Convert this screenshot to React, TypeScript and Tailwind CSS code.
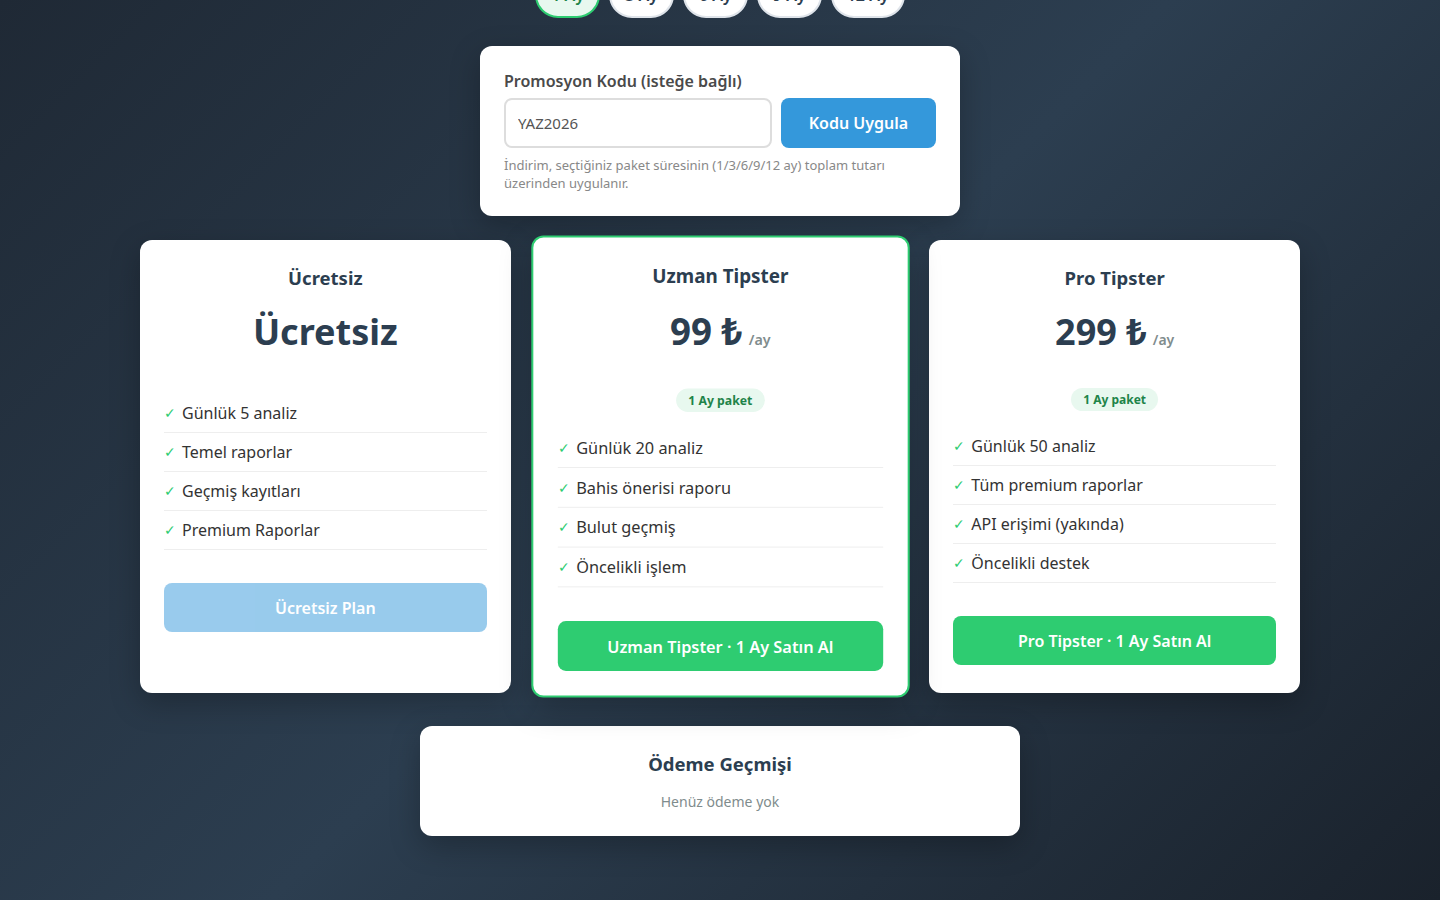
import React from "react";

type Plan = {
  title: string;
  price: string;
  perMonth: boolean;
  badge?: string;
  features: string[];
  button: string;
  featured?: boolean;
  disabled?: boolean;
};

const plans: Plan[] = [
  {
    title: "Ücretsiz",
    price: "Ücretsiz",
    perMonth: false,
    features: ["Günlük 5 analiz", "Temel raporlar", "Geçmiş kayıtları", "Premium Raporlar"],
    button: "Ücretsiz Plan",
    disabled: true,
  },
  {
    title: "Uzman Tipster",
    price: "99 ₺",
    perMonth: true,
    badge: "1 Ay paket",
    features: ["Günlük 20 analiz", "Bahis önerisi raporu", "Bulut geçmiş", "Öncelikli işlem"],
    button: "Uzman Tipster · 1 Ay Satın Al",
    featured: true,
  },
  {
    title: "Pro Tipster",
    price: "299 ₺",
    perMonth: true,
    badge: "1 Ay paket",
    features: ["Günlük 50 analiz", "Tüm premium raporlar", "API erişimi (yakında)", "Öncelikli destek"],
    button: "Pro Tipster · 1 Ay Satın Al",
  },
];

const durations = ["1 Ay", "3 Ay", "6 Ay", "9 Ay", "12 Ay"];

function PlanCard({ plan }: { plan: Plan }) {
  return (
    <div
      className={
        plan.featured
          ? "flex flex-col rounded-xl bg-white px-6 pt-6 pb-6 border-2 border-[#2ecc71] scale-[1.02] shadow-[0_10px_30px_rgba(0,0,0,0.25)]"
          : "flex flex-col rounded-xl bg-white px-6 pt-6 pb-6 shadow-[0_10px_30px_rgba(0,0,0,0.25)]"
      }
    >
      <h3 className="text-center text-[18.5px] leading-[28px] font-bold text-[#2c3e50]">{plan.title}</h3>
      <div className="mt-4 flex h-[48px] items-center justify-center">
        <span className="text-[36px] leading-[48px] font-bold text-[#2c3e50]">{plan.price}</span>
        {plan.perMonth && (
          <span className="ml-[6px] mt-[14px] text-[14px] font-semibold text-[#7f8c8d]">/ay</span>
        )}
      </div>
      {plan.badge ? (
        <div className="mt-[32px] flex justify-center">
          <span className="rounded-full bg-[#e8f8ef] px-3 text-[12px] leading-[23px] font-bold text-[#1e8449]">
            {plan.badge}
          </span>
        </div>
      ) : null}
      <ul className={plan.badge ? "mt-[16px]" : "mt-[38px]"}>
        {plan.features.map((f) => (
          <li
            key={f}
            className="flex items-center border-b border-[#eeeeee] py-[9px] text-[16px] leading-[20px] text-[#333333]"
          >
            <span className="mr-[6px] text-[14px] text-[#2ecc71]">✓</span>
            {f}
          </li>
        ))}
      </ul>
      <button
        className={
          plan.disabled
            ? "mt-[33px] h-[49px] w-full rounded-lg bg-[#3498db] opacity-50 text-[16px] font-semibold text-white"
            : "mt-[33px] h-[49px] w-full rounded-lg bg-[#2ecc71] text-[16px] font-semibold text-white"
        }
      >
        {plan.button}
      </button>
    </div>
  );
}

export default function App() {
  return (
    <div className="flex min-h-screen flex-col items-center bg-[linear-gradient(135deg,#1f2935_0%,#2c3e50_50%,#1a222c_100%)] font-['Noto_Sans',sans-serif] pb-16">
      <div className="mt-[-28px] flex gap-[9px]">
        {durations.map((d, i) => (
          <button
            key={d}
            className={
              i === 0
                ? "rounded-full border-2 border-[#2ecc71] bg-[#e8f8ef] px-[14px] py-[10px] text-[16px] leading-[22px] font-semibold text-[#1e8449]"
                : "rounded-full border-2 border-[#dfe4ea] bg-white px-[14px] py-[10px] text-[16px] leading-[22px] font-semibold text-[#2c3e50]"
            }
          >
            {d}
          </button>
        ))}
      </div>

      <div className="mt-[28px] w-[480px] rounded-xl bg-white p-6 shadow-[0_10px_30px_rgba(0,0,0,0.25)]">
        <label className="block text-[16px] leading-[22px] font-semibold text-[#4a4a4a]">
          Promosyon Kodu (isteğe bağlı)
        </label>
        <div className="mt-[6px] flex gap-[9px]">
          <input
            defaultValue="YAZ2026"
            className="h-[50px] min-w-0 flex-1 rounded-lg border-2 border-[#dddddd] px-[12px] text-[15px] text-[#555555] outline-none"
          />
          <button className="h-[50px] w-[155px] rounded-lg bg-[#3498db] text-[16px] font-semibold text-white">
            Kodu Uygula
          </button>
        </div>
        <p className="mt-[8px] text-[13px] leading-[18px] text-[#888888]">
          İndirim, seçtiğiniz paket süresinin (1/3/6/9/12 ay) toplam tutarı üzerinden uygulanır.
        </p>
      </div>

      <div className="mt-6 grid w-[1160px] grid-cols-3 gap-6">
        {plans.map((p) => (
          <PlanCard key={p.title} plan={p} />
        ))}
      </div>

      <div className="mt-[33px] w-[600px] rounded-xl bg-white px-6 pt-6 pb-[24px] text-center shadow-[0_10px_30px_rgba(0,0,0,0.25)]">
        <h3 className="text-[18.5px] leading-[28px] font-bold text-[#2c3e50]">Ödeme Geçmişi</h3>
        <p className="mt-[14px] text-[14px] leading-[20px] text-[#7f8c8d]">Henüz ödeme yok</p>
      </div>
    </div>
  );
}
